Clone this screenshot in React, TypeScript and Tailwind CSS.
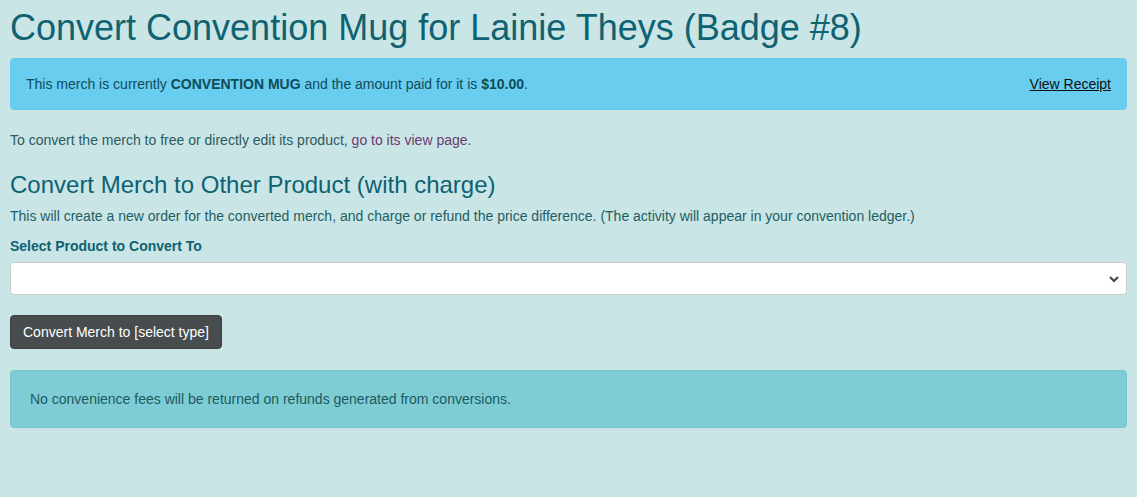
import React from "react";

export default function App() {
  return (
    <div className="min-h-[497px] w-full bg-[#cae5e6] px-[10px] text-[14px] leading-[20px] text-[#1d5e63]" style={{ fontFamily: '"Liberation Sans", Arial, sans-serif' }}>
      <h1 className="pt-[6px] text-[36px] leading-[44px] text-[#0e6271]">Convert Convention Mug for Lainie Theys (Badge #8)</h1>
      <div className="mt-[8px] flex items-center justify-between rounded-[4px] border border-[#66cbef] bg-[#69cdf0] px-[15px] py-[15px] text-[#0f4c57]">
        <span>
          This merch is currently <b>CONVENTION MUG</b> and the amount paid for it is <b>$10.00</b>.
        </span>
        <a href="#" className="text-[#111] underline">View Receipt</a>
      </div>
      <p className="mt-[20px] text-[#2a5a5e]">
        To convert the merch to free or directly edit its product, <a href="#" className="text-[#6b3b73]">go to its view page.</a>
      </p>
      <h3 className="mt-[20px] text-[24px] leading-[30px] text-[#0e6271]">Convert Merch to Other Product (with charge)</h3>
      <p className="mt-[6px] text-[#1d5e63]">This will create a new order for the converted merch, and charge or refund the price difference. (The activity will appear in your convention ledger.)</p>
      <label className="mt-[10px] block font-bold text-[#0e6271]">Select Product to Convert To</label>
      <div className="mt-[6px] flex h-[33px] items-center justify-end rounded-[4px] border border-[#cccccc] bg-white pr-[6px]">
        <svg width="12" height="8" viewBox="0 0 12 8"><path d="M2 2 L6 6 L10 2" stroke="#444" strokeWidth="2.2" fill="none" /></svg>
      </div>
      <button className="mt-[20px] block h-[34px] rounded-[4px] border border-[#3d4143] bg-[#474c4e] px-[12px] text-white">Convert Merch to [select type]</button>
      <div className="mt-[21px] rounded-[4px] border border-[#76c5cd] bg-[#7ecdd4] px-[19px] py-[18px] text-[#1b5a5f]">
        No convenience fees will be returned on refunds generated from conversions.
      </div>
    </div>
  );
}
